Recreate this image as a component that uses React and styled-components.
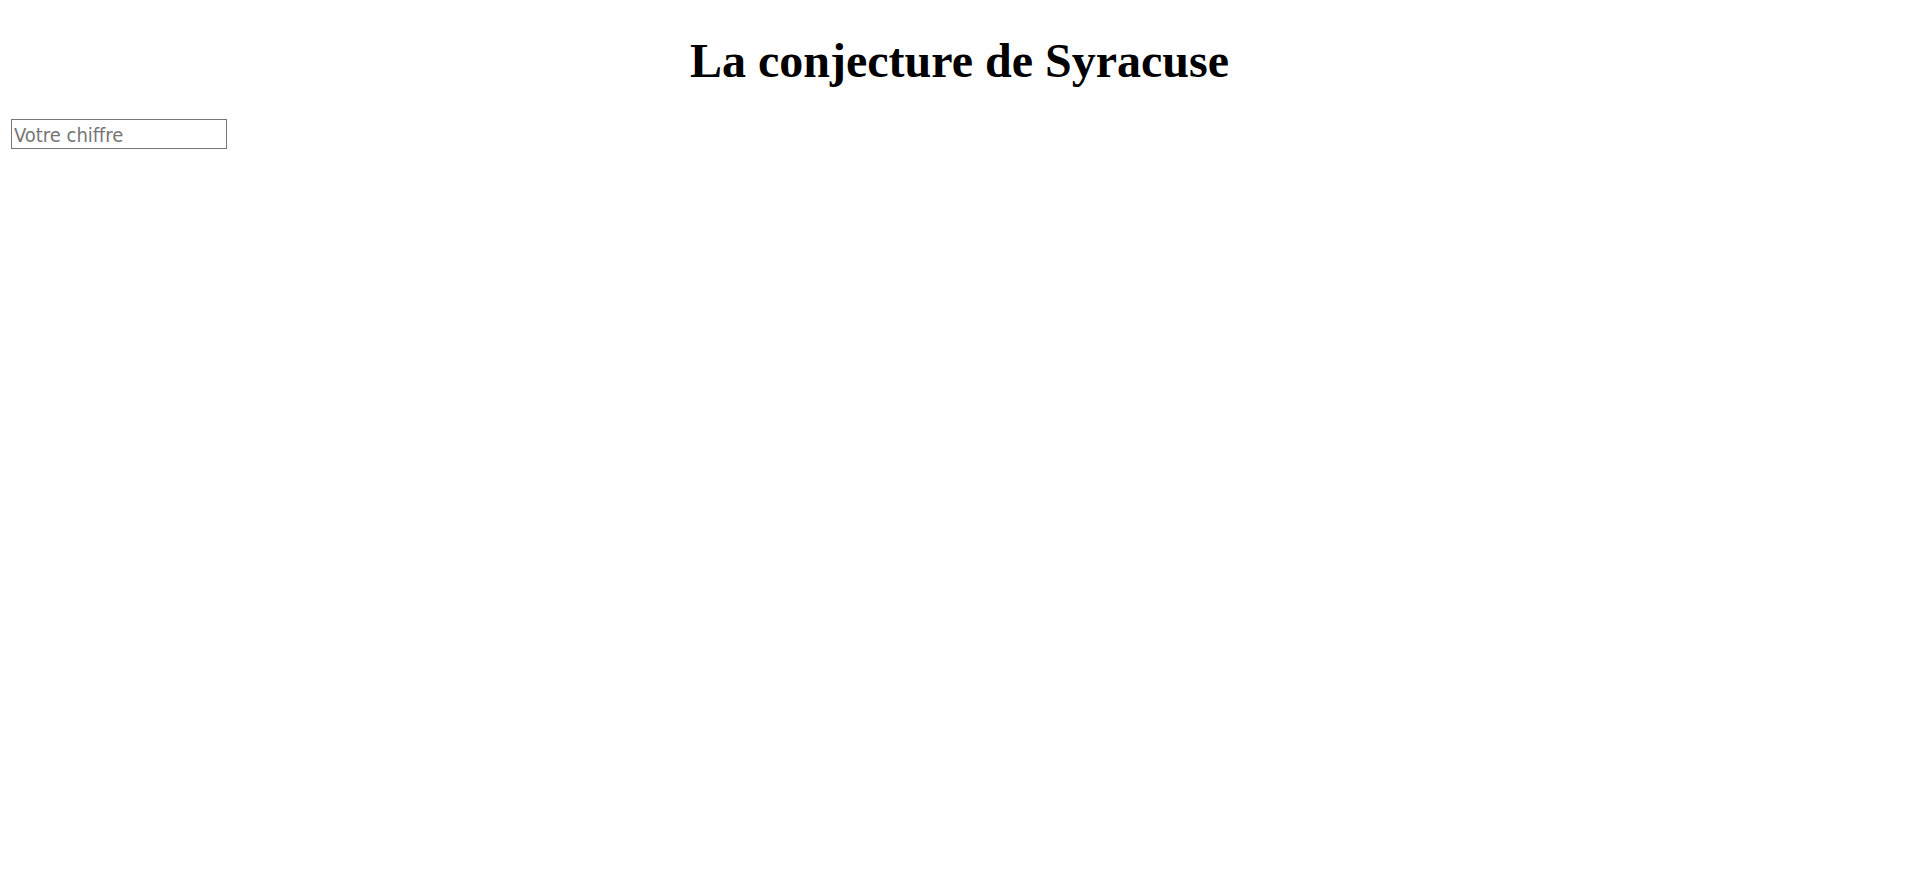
import React from "react";
import styled, { createGlobalStyle } from "styled-components";

const GlobalStyle = createGlobalStyle`
  body {
    margin: 0;
    background: #fff;
    color: #000;
    font-family: "Liberation Serif", "Times New Roman", serif;
  }
`;

const Page = styled.main`
  padding: 32px 11px;
`;

const Title = styled.h1`
  margin: 0 0 30px;
  font-size: 48px;
  line-height: 57px;
  font-weight: 700;
  text-align: center;
`;

const NumberInput = styled.input`
  display: block;
  box-sizing: border-box;
  width: 216px;
  height: 30px;
  padding: 3px 2px 1px;
  border: 1px solid #767676;
  border-radius: 0;
  background: #fff;
  color: #000;
  font-family: Tahoma, "DejaVu Sans Condensed", sans-serif;
  font-size: 20px;

  &::placeholder {
    color: #757575;
    opacity: 1;
  }
`;

export default function App() {
  return (
    <>
      <GlobalStyle />
      <Page>
        <Title>La conjecture de Syracuse</Title>
        <NumberInput type="text" placeholder="Votre chiffre" aria-label="Votre chiffre" />
      </Page>
    </>
  );
}
